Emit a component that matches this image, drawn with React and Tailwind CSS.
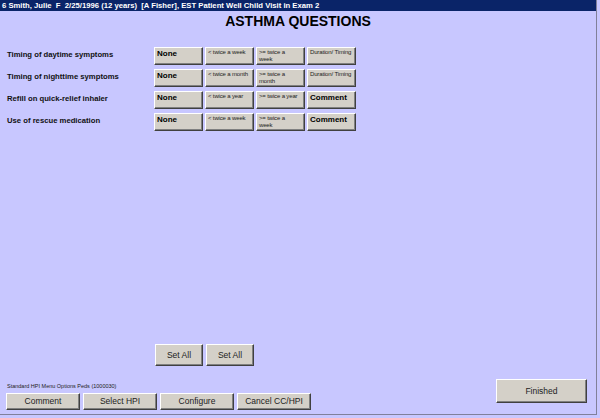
import React from "react";

const rows = [
    { label: "Timing of daytime symptoms", opts: ["< twice a week", ">= twice a\nweek"], last: "Duration/ Timing" },
    { label: "Timing of nighttime symptoms", opts: ["< twice a month", ">= twice a\nmonth"], last: "Duration/ Timing" },
    { label: "Refill on quick-relief inhaler", opts: ["< twice a year", ">= twice a year"], last: "Comment" },
    { label: "Use of rescue medication", opts: ["< twice a week", ">= twice a\nweek"], last: "Comment" },
];

// classic raised win32 button look
const bevel =
    "bg-[#d4d0c8] border border-t-white border-l-white border-r-[#404040] border-b-[#404040] shadow-[inset_-1px_-1px_#808080]";

const OptionButton = ({ children, bold }) => (
    <div
        className={`${bevel} w-[49px] h-[18px] overflow-hidden px-[2px] whitespace-pre ${
            bold
                ? "text-[8px] font-bold leading-[12px] text-black"
                : "text-[6px] leading-[7px] pt-[1px] tracking-[-0.15px] text-[#222]"
        }`}
    >
        {children}
    </div>
);

const BarButton = ({ children, className }) => (
    <div
        className={`${bevel} flex items-center justify-center text-[8.5px] text-[#222] ${className}`}
    >
        {children}
    </div>
);

export default function App() {
    return (
        <div
            className="w-[600px] h-[418px] bg-[#c8c7ff] overflow-hidden"
            style={{ fontFamily: '"Liberation Sans", Arial, sans-serif' }}
        >
            <div className="w-[597px] h-[415px] border-r border-b border-[#80809a] flex flex-col">
                <div className="h-[11px] bg-[#0a2468] text-white text-[7.7px] font-bold leading-[11px] pl-[2px] whitespace-pre">
                    {"6 Smith, Julie  F  2/25/1996 (12 years)  [A Fisher], EST Patient Well Child Visit in Exam 2"}
                </div>

                <div className="mt-[2px] text-center text-[14px] font-bold leading-[16px] text-black">
                    ASTHMA QUESTIONS
                </div>

                <div className="mt-[18px] flex flex-col gap-[4px]">
                    {rows.map((row) => (
                        <div key={row.label} className="flex items-center h-[18px]">
                            <div className="w-[154px] pl-[7px] text-[7.7px] font-bold text-[#111] leading-[10px] -mt-[2px]">
                                {row.label}
                            </div>
                            <div className="flex gap-[2px]">
                                <OptionButton bold>None</OptionButton>
                                {row.opts.map((o) => (
                                    <OptionButton key={o}>{o}</OptionButton>
                                ))}
                                {row.last === "Comment" ? (
                                    <OptionButton bold>Comment</OptionButton>
                                ) : (
                                    <OptionButton>{row.last}</OptionButton>
                                )}
                            </div>
                        </div>
                    ))}
                </div>

                <div className="mt-[213px] ml-[155px] flex gap-[3px]">
                    <BarButton className="w-[48px] h-[22px]">Set All</BarButton>
                    <BarButton className="w-[48px] h-[22px]">Set All</BarButton>
                </div>

                <div className="mt-[13px] flex items-start justify-between">
                    <div className="pl-[6px] pt-[3px]">
                        <div className="text-[5.5px] leading-[8px] text-[#222] pl-[1px]">
                            Standard HPI Menu Options Peds (1000030)
                        </div>
                        <div className="mt-[3px] flex gap-[3px]">
                            <BarButton className="w-[74px] h-[17px]">Comment</BarButton>
                            <BarButton className="w-[74px] h-[17px]">Select HPI</BarButton>
                            <BarButton className="w-[74px] h-[17px]">Configure</BarButton>
                            <BarButton className="w-[74px] h-[17px]">Cancel CC/HPI</BarButton>
                        </div>
                    </div>
                    <BarButton className="w-[91px] h-[24px] mr-[9px]">Finished</BarButton>
                </div>
            </div>
        </div>
    );
}
